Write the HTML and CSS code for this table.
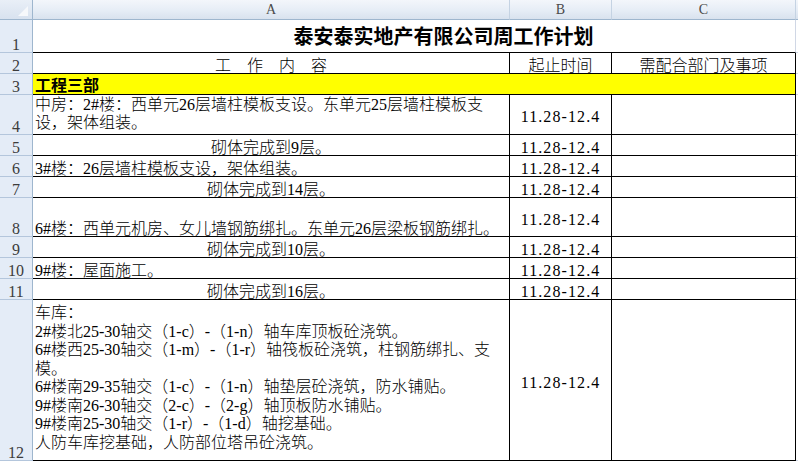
FILE: index.html
```html
<!DOCTYPE html>
<html lang="zh-CN">
<head>
<meta charset="utf-8">
<title>泰安泰实地产有限公司周工作计划</title>
<link rel="stylesheet" href="styles.css">
</head>
<body>
<div class="sheet">
  <div class="corner"><span class="tri"></span></div>
  <div class="colhdr">A</div>
  <div class="colhdr">B</div>
  <div class="colhdr">C</div>
  <div class="colhdr colhdr-d"></div>

  <div class="rowhdr">1</div>
  <div class="cell title span3">泰安泰实地产有限公司周工作计划</div>
  <div class="cell extra"></div>

  <div class="rowhdr">2</div>
  <div class="cell head">工　作　内　容</div>
  <div class="cell head">起止时间</div>
  <div class="cell head">需配合部门及事项</div>
  <div class="cell extra"></div>

  <div class="rowhdr">3</div>
  <div class="cell dept span3">工程三部</div>
  <div class="cell extra"></div>

  <div class="rowhdr">4</div>
  <div class="cell txt mid">中房：2#楼：西单元26层墙柱模板支设。东单元25层墙柱模板支<br>设，架体组装。</div>
  <div class="cell date">11.28-12.4</div>
  <div class="cell"></div>
  <div class="cell extra"></div>

  <div class="rowhdr">5</div>
  <div class="cell txt center">砌体完成到9层。</div>
  <div class="cell date">11.28-12.4</div>
  <div class="cell"></div>
  <div class="cell extra"></div>

  <div class="rowhdr">6</div>
  <div class="cell txt">3#楼：26层墙柱模板支设，架体组装。</div>
  <div class="cell date">11.28-12.4</div>
  <div class="cell"></div>
  <div class="cell extra"></div>

  <div class="rowhdr">7</div>
  <div class="cell txt center">砌体完成到14层。</div>
  <div class="cell date">11.28-12.4</div>
  <div class="cell"></div>
  <div class="cell extra"></div>

  <div class="rowhdr">8</div>
  <div class="cell txt">6#楼：西单元机房、女儿墙钢筋绑扎。东单元26层梁板钢筋绑扎。</div>
  <div class="cell date">11.28-12.4</div>
  <div class="cell"></div>
  <div class="cell extra"></div>

  <div class="rowhdr">9</div>
  <div class="cell txt center">砌体完成到10层。</div>
  <div class="cell date">11.28-12.4</div>
  <div class="cell"></div>
  <div class="cell extra"></div>

  <div class="rowhdr">10</div>
  <div class="cell txt">9#楼：屋面施工。</div>
  <div class="cell date">11.28-12.4</div>
  <div class="cell"></div>
  <div class="cell extra"></div>

  <div class="rowhdr">11</div>
  <div class="cell txt center">砌体完成到16层。</div>
  <div class="cell date">11.28-12.4</div>
  <div class="cell"></div>
  <div class="cell extra"></div>

  <div class="rowhdr">12</div>
  <div class="cell txt mid tall">车库：<br>2#楼北25-30轴交（1-c）-（1-n）轴车库顶板砼浇筑。<br>6#楼西25-30轴交（1-m）-（1-r）轴筏板砼浇筑，柱钢筋绑扎、支<br>模。<br>6#楼南29-35轴交（1-c）-（1-n）轴垫层砼浇筑，防水铺贴。<br>9#楼南26-30轴交（2-c）-（2-g）轴顶板防水铺贴。<br>9#楼南25-30轴交（1-r）-（1-d）轴挖基础。<br>人防车库挖基础，人防部位塔吊砼浇筑。</div>
  <div class="cell date">11.28-12.4</div>
  <div class="cell"></div>
  <div class="cell extra"></div>
</div>
</body>
</html>
```

FILE: styles.css
```css
* { box-sizing: border-box; }
html, body { margin: 0; padding: 0; background: #ffffff; }
body { width: 798px; height: 462px; overflow: hidden; }

.sheet {
  display: grid;
  grid-template-columns: 33px 477px 102px 184px 1fr;
  grid-template-rows: 20px 33px 21px 21px 40px 21px 21px 21px 39px 21px 21px 21px 161px;
  font-family: "Liberation Serif", "Noto Sans CJK SC", serif;
  font-size: 16px;
  color: #000;
}

.corner {
  position: relative;
  background: linear-gradient(#e9eff7, #d8e2ef);
  border-right: 1px solid #9eb6ce;
  border-bottom: 1px solid #9eb6ce;
}
.tri {
  position: absolute;
  right: 4px;
  bottom: 3px;
  width: 10px;
  height: 10px;
  background: #f6f8fb;
  clip-path: polygon(100% 0, 100% 100%, 0 100%);
}

.colhdr {
  display: flex;
  align-items: center;
  justify-content: center;
  background: linear-gradient(#f3f6fb 0%, #e6edf6 55%, #d9e2ee 100%);
  border-right: 1px solid #c5d3e3;
  border-bottom: 1px solid #9eb6ce;
  font-family: "Liberation Serif", serif;
  font-size: 14px;
  color: #4a4a4a;
  padding-top: 1px;
}
.colhdr-d { border-right: 0; }

.rowhdr {
  display: flex;
  align-items: flex-end;
  justify-content: center;
  background: #e4ecf7;
  border-right: 1px solid #9eb6ce;
  border-bottom: 1px solid #b4c6dc;
  font-family: "Liberation Serif", serif;
  font-size: 16px;
  line-height: 15px;
  color: #3c3c3c;
  padding-bottom: 0;
}

.cell {
  display: flex;
  align-items: flex-end;
  border-right: 1px solid #000;
  border-bottom: 1px solid #000;
  white-space: nowrap;
  line-height: 14px;
  padding: 0 0 0 2px;
}
.span3 { grid-column: span 3; }
.extra { border-right: 0; border-bottom: 1px solid #d0d7e5; }

.title {
  justify-content: center;
  padding-left: 59px;
  padding-bottom: 4px;
  font-size: 20px;
  font-weight: bold;
  border-right: 1px solid #d0d7e5;
  line-height: 22px;
}

.head { justify-content: center; padding-left: 0; line-height: 15px; font-weight: 300; }

.dept {
  background: #ffff00;
  font-weight: bold;
  line-height: 16px;
}

.txt { font-weight: 300; }
.mid { align-items: center; line-height: 18.5px; padding-bottom: 1px; }
.tall { padding-bottom: 4px; }
.center { justify-content: center; padding-left: 0; }

.date {
  align-items: center;
  justify-content: center;
  padding: 5px 0 0 0;
  line-height: 18px;
  letter-spacing: 1.1px;
}
```
